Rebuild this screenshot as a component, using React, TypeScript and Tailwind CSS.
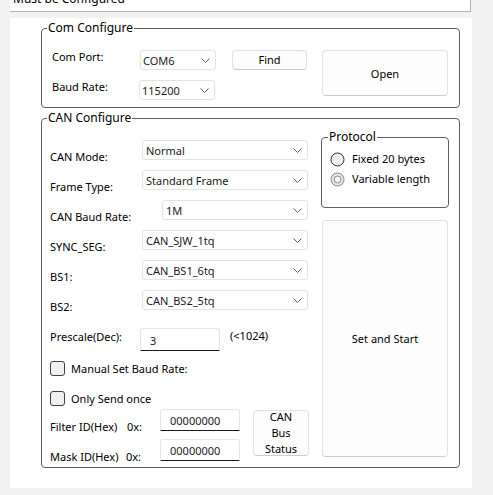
import React from 'react';

// Win11-style WinForms controls, drawn with plain divs

const Chevron = () => (
  <svg width="9" height="5" viewBox="0 0 9 5" className="shrink-0">
    <path d="M0.5 0.5 L4.5 4.5 L8.5 0.5" fill="none" stroke="#5c5c5c" strokeWidth="1" />
  </svg>
);

const Combo: React.FC<{ value: string; className?: string }> = ({ value, className = '' }) => (
  <div
    className={`flex h-[20px] items-center justify-between rounded-[3px] border border-[#e3e3e3] bg-white pl-[2px] pr-[5px] text-[#1b1b1b] ${className}`}
  >
    <span className="mt-[1px]">{value}</span>
    <Chevron />
  </div>
);

const TextBox: React.FC<{ value: string; className?: string }> = ({ value, className = '' }) => (
  <div
    className={`rounded-t-[3px] border border-[#e6e6e6] border-b-[#1a1a1a] bg-white text-[#1b1b1b] ${className}`}
  >
    {value}
  </div>
);

const Btn: React.FC<{ children: React.ReactNode; className?: string }> = ({ children, className = '' }) => (
  <button
    type="button"
    className={`flex items-center justify-center rounded-[4px] border border-[#e2e2e2] border-b-[#cccccc] bg-[#fdfdfd] text-black ${className}`}
  >
    {children}
  </button>
);

const CheckBox: React.FC<{ label: string; className?: string }> = ({ label, className = '' }) => (
  <div className={`flex h-[15px] items-center gap-[6px] ${className}`}>
    <div className="h-[15px] w-[15px] rounded-[3px] border border-[#404040] bg-[#f0f0f0]" />
    <span>{label}</span>
  </div>
);

const Radio: React.FC<{ checked?: boolean }> = ({ checked }) =>
  checked ? (
    <svg width="15" height="15" viewBox="0 0 15 15" className="shrink-0">
      <circle cx="7.5" cy="7.5" r="6.5" fill="#e8e8e8" stroke="#8a8a8a" />
      <circle cx="7.5" cy="7.5" r="3.5" fill="#f6f6f6" stroke="#8a8a8a" />
    </svg>
  ) : (
    <svg width="15" height="15" viewBox="0 0 15 15" className="shrink-0">
      <circle cx="7.5" cy="7.5" r="6.5" fill="#efefef" stroke="#333333" />
    </svg>
  );

const canRows = [
  { label: 'CAN Mode:', value: 'Normal', labelW: 'w-[92px]', comboW: 'w-[166px]' },
  { label: 'Frame Type:', value: 'Standard Frame', labelW: 'w-[92px]', comboW: 'w-[166px]' },
  { label: 'CAN Baud Rate:', value: '1M', labelW: 'w-[112px]', comboW: 'w-[146px]' },
  { label: 'SYNC_SEG:', value: 'CAN_SJW_1tq', labelW: 'w-[92px]', comboW: 'w-[166px]' },
  { label: 'BS1:', value: 'CAN_BS1_6tq', labelW: 'w-[92px]', comboW: 'w-[166px]' },
  { label: 'BS2:', value: 'CAN_BS2_5tq', labelW: 'w-[92px]', comboW: 'w-[166px]' },
];

export default function App() {
  return (
    <div className="h-[495px] w-[493px] overflow-hidden bg-[#f2f2f2] font-['Noto_Sans',sans-serif] text-[11px] leading-[16px] text-black">
      {/* status strip, scrolled so only the bottom of the text shows */}
      <div className="ml-[10px] h-[12px] w-[461px] overflow-hidden border-b border-r border-[#b3b3b3] bg-white">
        <div className="-mt-[10px] pl-[3px] text-[12px] leading-[18px]">Must be Configured</div>
      </div>

      {/* main panel */}
      <div className="ml-[10px] mt-[6px] h-[470px] w-[462px] bg-white pt-[2px]">
        {/* Com Configure */}
        <fieldset className="ml-[31px] h-[88px] w-[419px] rounded-[4px] border border-[#5f5f5f] pl-[10px]">
          <legend className="-ml-[5px] px-[1px] text-[12px]">Com Configure</legend>
          <div className="mt-[14px] flex items-start">
            <div className="flex flex-col gap-[10px]">
              <div className="flex items-start">
                <span className="-mt-[1px] w-[88px]">Com Port:</span>
                <Combo value="COM6" className="w-[76px]" />
              </div>
              <div className="flex items-start">
                <span className="-mt-[1px] w-[87px]">Baud Rate:</span>
                <Combo value="115200" className="w-[76px]" />
              </div>
            </div>
            <Btn className="ml-[16px] h-[20px] w-[75px]">Find</Btn>
            <Btn className="ml-[15px] h-[46px] w-[126px] pt-[2px]">Open</Btn>
          </div>
        </fieldset>

        {/* CAN Configure */}
        <fieldset className="ml-[31px] mt-[2px] h-[358px] w-[419px] rounded-[4px] border border-[#5f5f5f] pl-[8px]">
          <legend className="-ml-[3px] px-[1px] text-[12px]">CAN Configure</legend>
          <div className="flex">
            <div className="w-[271px] pt-[14px]">
              {canRows.map((row) => (
                <div key={row.label} className="flex h-[30px] items-start">
                  <span className={`mt-[9px] ${row.labelW}`}>{row.label}</span>
                  <Combo value={row.value} className={`pl-[3px] ${row.comboW}`} />
                </div>
              ))}

              <div className="flex h-[38px] items-start">
                <span className="mt-[9px] w-[90px]">Prescale(Dec):</span>
                <TextBox value="3" className="mt-[8px] h-[23px] w-[80px] pl-[9px] pt-[4px]" />
                <span className="ml-[10px] mt-[8px]">(&lt;1024)</span>
              </div>

              <CheckBox label="Manual Set Baud Rate:" className="mt-[3px]" />
              <CheckBox label="Only Send once" className="mt-[15px]" />

              <div className="mt-[3px] flex items-start">
                <div className="flex flex-col gap-[8px]">
                  <div className="flex h-[22px] items-start">
                    <span className="mt-[10px] w-[77px]">Filter ID(Hex)</span>
                    <span className="mt-[10px] w-[33px]">0x:</span>
                    <TextBox value="00000000" className="h-[22px] w-[80px] pl-[9px] pt-[3px]" />
                  </div>
                  <div className="flex h-[22px] items-start">
                    <span className="mt-[10px] w-[76px]">Mask ID(Hex)</span>
                    <span className="mt-[10px] w-[34px]">0x:</span>
                    <TextBox value="00000000" className="h-[22px] w-[80px] pl-[9px] pt-[3px]" />
                  </div>
                </div>
                <Btn className="ml-[13px] mt-[1px] h-[46px] w-[56px] flex-col">
                  <span>CAN</span>
                  <span>Bus</span>
                  <span>Status</span>
                </Btn>
              </div>
            </div>

            <div className="pt-[3px]">
              <fieldset className="h-[79px] w-[128px] rounded-[4px] border border-[#5f5f5f] pl-[7px]">
                <legend className="-ml-[1px] px-[1px] text-[12px]">Protocol</legend>
                <div className="ml-[1px] mt-[4px] flex h-[20px] items-center gap-[7px]">
                  <Radio />
                  <span>Fixed 20 bytes</span>
                </div>
                <div className="ml-[1px] flex h-[20px] items-center gap-[7px]">
                  <Radio checked />
                  <span>Variable length</span>
                </div>
              </fieldset>
              <Btn className="ml-[1px] mt-[12px] h-[237px] w-[126px]">Set and Start</Btn>
            </div>
          </div>
        </fieldset>
      </div>
    </div>
  );
}
